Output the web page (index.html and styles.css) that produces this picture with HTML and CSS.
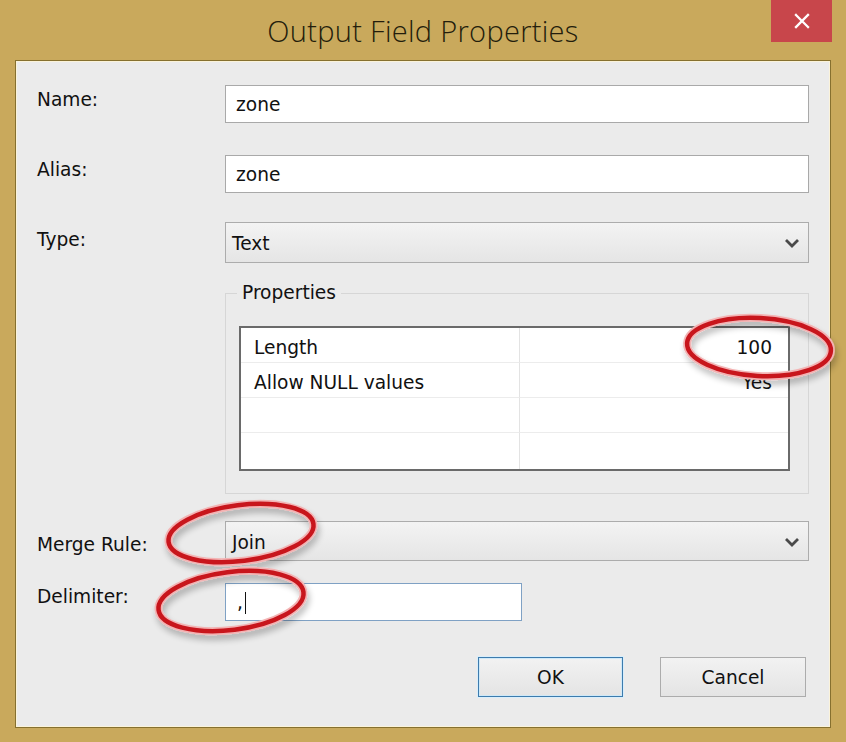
FILE: index.html
```html
<!DOCTYPE html>
<html lang="en">
<head>
<meta charset="utf-8">
<title>Output Field Properties</title>
<link rel="stylesheet" href="styles.css">
</head>
<body>
<div class="window">
  <div class="titlebar">
    <span class="spacer"></span>
    <h1 class="title">Output Field Properties</h1>
    <div class="close-cell">
      <button class="close" type="button" aria-label="Close">
        <svg width="18" height="18" viewBox="0 0 18 18"><path d="M3 3 L15 15 M15 3 L3 15" stroke="#fff" stroke-width="2.3" stroke-linecap="square" fill="none"/></svg>
      </button>
    </div>
  </div>
  <div class="client">
    <div class="row row-name">
      <span class="label lbl-name">Name:</span>
      <div class="field input">zone</div>
    </div>
    <div class="row row-alias">
      <span class="label lbl-alias">Alias:</span>
      <div class="field input">zone</div>
    </div>
    <div class="row row-type">
      <span class="label lbl-type">Type:</span>
      <div class="field select">
        <span class="select-text">Text</span>
        <svg class="chev" width="16" height="10" viewBox="0 0 16 10"><path d="M2 2 L8 8 L14 2" stroke="#4a4a4a" stroke-width="2.8" fill="none"/></svg>
      </div>
    </div>
    <div class="row row-props">
      <span class="label"></span>
      <fieldset class="props">
        <legend class="props-legend">Properties</legend>
        <div class="grid">
          <div class="cell name">Length</div><div class="cell value">100</div>
          <div class="cell name">Allow NULL values</div><div class="cell value">Yes</div>
          <div class="cell name"></div><div class="cell value"></div>
          <div class="cell name last"></div><div class="cell value last"></div>
        </div>
      </fieldset>
    </div>
    <div class="row row-merge">
      <span class="label lbl-merge">Merge Rule:</span>
      <div class="field select tall">
        <span class="select-text">Join</span>
        <svg class="chev" width="16" height="10" viewBox="0 0 16 10"><path d="M2 2 L8 8 L14 2" stroke="#4a4a4a" stroke-width="2.8" fill="none"/></svg>
      </div>
    </div>
    <div class="row row-delim">
      <span class="label lbl-delim">Delimiter:</span>
      <div class="field input focused">,<span class="caret"></span></div>
    </div>
    <div class="buttons">
      <button class="btn default" type="button">OK</button>
      <button class="btn" type="button">Cancel</button>
    </div>
  </div>
  <svg class="annotations" width="846" height="742" viewBox="0 0 846 742">
    <defs>
      <filter id="shadow" x="-20%" y="-30%" width="140%" height="180%">
        <feGaussianBlur in="SourceAlpha" stdDeviation="3"/>
        <feOffset dx="2" dy="5" result="b"/>
        <feComponentTransfer><feFuncA type="linear" slope="0.25"/></feComponentTransfer>
        <feMerge><feMergeNode/><feMergeNode in="SourceGraphic"/></feMerge>
      </filter>
    </defs>
    <g filter="url(#shadow)" fill="none" stroke-linecap="round">
      <g transform="translate(759 347) rotate(3)">
        <ellipse rx="72" ry="29" stroke="#f3b3b3" stroke-width="8"/>
        <ellipse rx="72" ry="29" stroke="#c8141e" stroke-width="4.5"/>
      </g>
      <g transform="translate(241 533) rotate(-7)">
        <ellipse rx="73" ry="28" stroke="#f3b3b3" stroke-width="8"/>
        <ellipse rx="73" ry="28" stroke="#c8141e" stroke-width="4.5"/>
      </g>
      <g transform="translate(231 601) rotate(-7)">
        <ellipse rx="73" ry="29" stroke="#f3b3b3" stroke-width="8"/>
        <ellipse rx="73" ry="29" stroke="#c8141e" stroke-width="4.5"/>
      </g>
    </g>
  </svg>
</div>
</body>
</html>
```
FILE: styles.css
```css
* { box-sizing: border-box; }
html, body { margin: 0; padding: 0; }
body {
  width: 846px;
  height: 742px;
  overflow: hidden;
  font-family: "DejaVu Sans", "Liberation Sans", sans-serif;
  font-size: 18.6px;
  color: #111;
}
.window {
  position: relative;
  width: 846px;
  height: 742px;
  background: #c9a95c;
  display: flex;
  flex-direction: column;
  padding: 0 15px 14px;
}
.titlebar {
  height: 60px;
  display: grid;
  grid-template-columns: 1fr auto 1fr;
  margin: 0 -15px;
}
.title {
  margin: 0;
  padding-top: 11px;
  font-family: "Open Sans", "Noto Sans", sans-serif;
  font-weight: 300;
  font-size: 29px;
  line-height: 40px;
  color: #231d0c;
  letter-spacing: 0.3px;
}
.close-cell { display: flex; justify-content: flex-end; align-items: flex-start; padding-right: 14px; }
.close {
  width: 61px;
  height: 42px;
  border: none;
  padding: 0;
  background: #c8464b;
  display: flex;
  align-items: center;
  justify-content: center;
}
.client {
  flex: 1;
  background: #ebebeb;
  border: 1px solid #86702f;
  box-shadow: inset 0 0 0 1px #fbf3da;
  padding: 24px 21px 0;
  display: flex;
  flex-direction: column;
}
.row {
  display: grid;
  grid-template-columns: 188px 1fr;
  align-items: start;
}
.label { line-height: 24px; }
.lbl-name, .lbl-alias { padding-top: 3px; }
.lbl-type { padding-top: 6px; }
.lbl-merge { padding-top: 12px; }
.lbl-delim { padding-top: 2px; }
.row-alias { margin-top: 32px; }
.row-type { margin-top: 29px; }
.row-props { margin-top: 17px; }
.row-merge { margin-top: 27px; }
.row-delim { margin-top: 22px; }
.field {
  height: 38px;
  border: 1px solid #a9a9a9;
  display: flex;
  align-items: center;
}
.input {
  background: #fff;
  padding-left: 10px;
  padding-top: 1px;
}
.input.focused {
  width: 297px;
  border-color: #7fa1c4;
  padding-left: 11px;
}
.caret {
  display: inline-block;
  width: 1.5px;
  height: 22px;
  background: #111;
  margin-left: 2px;
}
.select {
  height: 41px;
  background: linear-gradient(#f3f3f3, #e5e5e5);
  border-color: #acacac;
  padding-left: 6px;
  padding-right: 8px;
  justify-content: space-between;
}
.select-text { padding-top: 2px; }
.select.tall { height: 40px; }
.chev { margin-top: 1px; }
.props {
  margin: 0;
  border: 1px solid #d6d6d6;
  padding: 20px 18px 22px 13px;
  min-width: 0;
}
.props-legend {
  margin-left: -2px;
  padding: 0 5px;
  line-height: 26px;
}
.grid {
  display: grid;
  grid-template-columns: 279px 1fr;
  border: 2px solid #6a6a6a;
  background: #fff;
}
.cell {
  height: 35px;
  line-height: 24px;
  padding-top: 8px;
  border-bottom: 1px solid #ececec;
}
.cell.last { border-bottom: none; height: 36px; }
.cell.name {
  padding-left: 13px;
  border-right: 1px solid #e3e3e3;
}
.cell.value {
  text-align: right;
  padding-right: 16px;
}
.buttons {
  margin-top: 36px;
  display: flex;
  justify-content: flex-end;
  gap: 37px;
  padding-right: 3px;
}
.btn {
  width: 146px;
  height: 40px;
  font-family: inherit;
  font-size: 18.6px;
  color: #111;
  background: linear-gradient(#f2f2f2, #e4e4e4);
  border: 1px solid #acacac;
  padding: 0;
}
.btn.default {
  width: 145px;
  border-color: #3d7bad;
  box-shadow: inset 0 0 0 1px #cfe8f7, 0 0 0 1px #d9eefb;
}
.annotations {
  position: absolute;
  left: 0;
  top: 0;
  pointer-events: none;
}
```
